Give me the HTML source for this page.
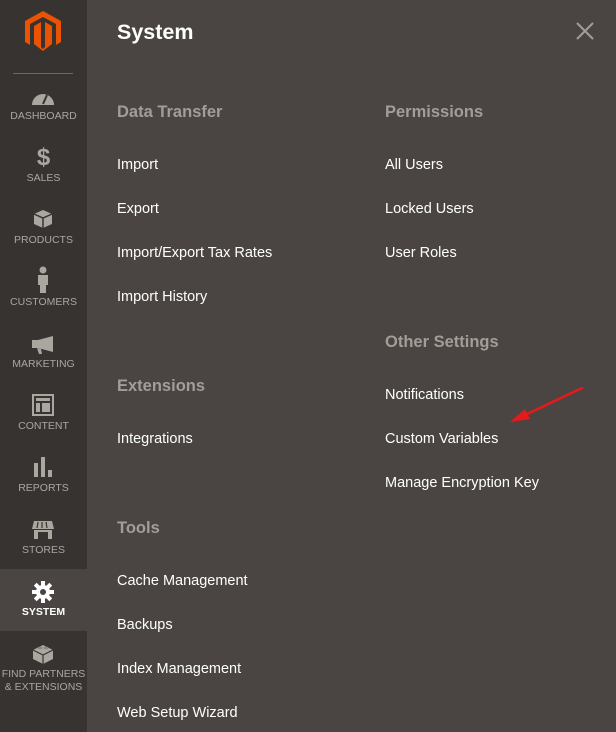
<!DOCTYPE html>
<html><head><meta charset="utf-8"><style>
*{margin:0;padding:0;box-sizing:border-box}
body{width:616px;height:732px;background:#4a4542;font-family:"Liberation Sans",sans-serif;position:relative;overflow:hidden}
.sb{position:absolute;left:0;top:0;width:87px;height:732px;background:#373330}
.act{position:absolute;left:0;top:569px;width:87px;height:62px;background:#4a4542}
.lbl{position:absolute;left:0;width:87px;text-align:center;font-size:10.5px;color:#aaa6a0;line-height:13px}
.ic{position:absolute;left:0;width:87px;text-align:center}
.t{position:absolute;font-size:14.5px;color:#fff;line-height:20px;white-space:nowrap}
.h{position:absolute;font-size:16.5px;color:#a39d98;font-weight:bold;line-height:22px;white-space:nowrap}
</style></head><body>
<div class="sb"></div>
<div class="act"></div>
<svg style="position:absolute;left:25px;top:11px" width="36" height="40" viewBox="0 0 36 40"><path d="M18 0L36 10V31L31 34V13L18 6L5 13V34L0 31V10Z M9 15L16 11V36L18 38L20 36V11L27 15V33L18 40L9 33Z" fill="#eb5202"/></svg>
<div style="position:absolute;left:13px;top:73px;width:60px;height:1px;background:#6e6762"></div>
<svg style="position:absolute;left:31px;top:89px" width="24" height="17" viewBox="0 0 24 17"><path d="M1 16A11 11 0 0 1 23 16Z" fill="#aaa6a0"/><path d="M12 15L16 6" stroke="#373330" stroke-width="2"/></svg>
<div class="lbl" style="top:110px">DASHBOARD</div>
<div class="ic" style="top:144px;font-size:24px;font-weight:bold;color:#aaa6a0;line-height:28px">$</div>
<div class="lbl" style="top:172px">SALES</div>
<svg style="position:absolute;left:33px;top:209px" width="20" height="20" viewBox="0 0 20 20"><path d="M10 1L19 5V15L10 19L1 15V5Z" fill="#aaa6a0"/><path d="M1 5L10 9L19 5M10 9V19" stroke="#373330" stroke-width="1.5" fill="none"/></svg>
<div class="lbl" style="top:234px">PRODUCTS</div>
<svg style="position:absolute;left:36px;top:266px" width="14" height="28" viewBox="0 0 14 28"><circle cx="7" cy="4" r="3.5" fill="#aaa6a0"/><path d="M2 9H12V19H10V27H4V19H2Z" fill="#aaa6a0"/></svg>
<div class="lbl" style="top:296px">CUSTOMERS</div>
<svg style="position:absolute;left:31px;top:335px" width="24" height="20" viewBox="0 0 24 20"><path d="M1 5H7L22 1V17L7 13H1Z M6 13L8 19H11L10 14Z" fill="#aaa6a0"/></svg>
<div class="lbl" style="top:358px">MARKETING</div>
<svg style="position:absolute;left:32px;top:394px" width="22" height="22" viewBox="0 0 22 22"><rect x="1" y="1" width="20" height="20" fill="none" stroke="#aaa6a0" stroke-width="2"/><rect x="4" y="4" width="14" height="3" fill="#aaa6a0"/><rect x="4" y="9" width="4" height="9" fill="#aaa6a0"/><rect x="10" y="9" width="8" height="9" fill="#aaa6a0"/></svg>
<div class="lbl" style="top:420px">CONTENT</div>
<svg style="position:absolute;left:33px;top:457px" width="20" height="20" viewBox="0 0 20 20"><rect x="1" y="6" width="4" height="14" fill="#aaa6a0"/><rect x="8" y="0" width="4" height="20" fill="#aaa6a0"/><rect x="15" y="13" width="4" height="7" fill="#aaa6a0"/></svg>
<div class="lbl" style="top:482px">REPORTS</div>
<svg style="position:absolute;left:31px;top:520px" width="24" height="20" viewBox="0 0 24 20"><path d="M3 1H21L23 9H1Z" fill="#aaa6a0"/><path d="M7 2L6 8M11 2V8M15 2L16 8" stroke="#373330" stroke-width="1.2"/><path d="M3 10H21V19H3Z" fill="#aaa6a0"/><rect x="7" y="12" width="10" height="7" fill="#373330"/></svg>
<div class="lbl" style="top:544px">STORES</div>
<svg style="position:absolute;left:32px;top:581px" width="22" height="22" viewBox="0 0 22 22"><g fill="#fff"><circle cx="11" cy="11" r="7"/><rect x="9" y="0" width="4" height="22"/><rect x="0" y="9" width="22" height="4"/><rect x="9" y="0" width="4" height="22" transform="rotate(45 11 11)"/><rect x="9" y="0" width="4" height="22" transform="rotate(-45 11 11)"/></g><circle cx="11" cy="11" r="3" fill="#4a4542"/></svg>
<div class="lbl" style="top:606px;color:#fff;font-weight:bold">SYSTEM</div>
<svg style="position:absolute;left:32px;top:642px" width="22" height="24" viewBox="0 0 22 24"><path d="M1 8L11 3L21 8V17L11 22L1 17Z" fill="#aaa6a0"/><path d="M1 8L11 13L21 8M11 13V22" stroke="#373330" stroke-width="1.2" fill="none"/><ellipse cx="8" cy="6" rx="2.5" ry="1.2" fill="#8a8580"/><ellipse cx="14" cy="6" rx="2.5" ry="1.2" fill="#8a8580"/></svg>
<div class="lbl" style="top:668px">FIND PARTNERS<br>&amp; EXTENSIONS</div>

<div style="position:absolute;left:117px;top:18px;font-size:21.5px;font-weight:bold;color:#fff;line-height:28px">System</div>
<svg style="position:absolute;left:576px;top:22px" width="18" height="18" viewBox="0 0 18 18"><path d="M1 1L17 17M17 1L1 17" stroke="#a39d98" stroke-width="2"/></svg>

<div class="h" style="left:117px;top:101px">Data Transfer</div>
<div class="t" style="left:117px;top:155px">Import</div>
<div class="t" style="left:117px;top:199px">Export</div>
<div class="t" style="left:117px;top:243px">Import/Export Tax Rates</div>
<div class="t" style="left:117px;top:287px">Import History</div>
<div class="h" style="left:117px;top:375px">Extensions</div>
<div class="t" style="left:117px;top:429px">Integrations</div>
<div class="h" style="left:117px;top:517px">Tools</div>
<div class="t" style="left:117px;top:571px">Cache Management</div>
<div class="t" style="left:117px;top:615px">Backups</div>
<div class="t" style="left:117px;top:659px">Index Management</div>
<div class="t" style="left:117px;top:703px">Web Setup Wizard</div>

<div class="h" style="left:385px;top:101px">Permissions</div>
<div class="t" style="left:385px;top:155px">All Users</div>
<div class="t" style="left:385px;top:199px">Locked Users</div>
<div class="t" style="left:385px;top:243px">User Roles</div>
<div class="h" style="left:385px;top:331px">Other Settings</div>
<div class="t" style="left:385px;top:385px">Notifications</div>
<div class="t" style="left:385px;top:429px">Custom Variables</div>
<div class="t" style="left:385px;top:473px">Manage Encryption Key</div>

<svg style="position:absolute;left:505px;top:383px" width="82" height="44" viewBox="0 0 82 44"><path d="M77 5L18 33" stroke="#e8191a" stroke-width="2.5" stroke-linecap="round"/><path d="M5 39L20 26L25 36Z" fill="#e8191a"/></svg>
</body></html>
